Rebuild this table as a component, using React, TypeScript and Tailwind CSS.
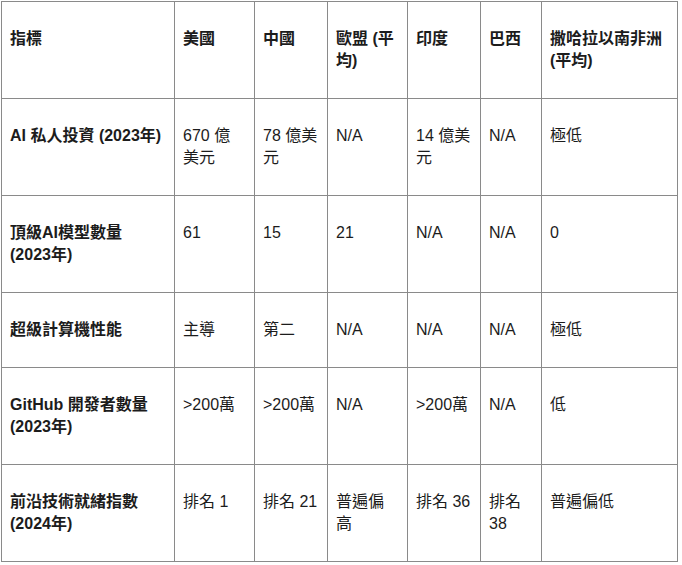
const font = { fontFamily: '"Liberation Sans", "Noto Sans CJK TC", sans-serif' }

const headers = [["指標"], ["美國"], ["中國"], ["歐盟 (平", "均)"], ["印度"], ["巴西"], ["撒哈拉以南非洲", "(平均)"]]

const rows: string[][][] = [
  [["AI 私人投資 (2023年)"], ["670 億", "美元"], ["78 億美", "元"], ["N/A"], ["14 億美", "元"], ["N/A"], ["極低"]],
  [["頂級AI模型數量", "(2023年)"], ["61"], ["15"], ["21"], ["N/A"], ["N/A"], ["0"]],
  [["超級計算機性能"], ["主導"], ["第二"], ["N/A"], ["N/A"], ["N/A"], ["極低"]],
  [["GitHub 開發者數量", "(2023年)"], [">200萬"], [">200萬"], ["N/A"], [">200萬"], ["N/A"], ["低"]],
  [["前沿技術就緒指數", "(2024年)"], ["排名 1"], ["排名 21"], ["普遍偏", "高"], ["排名 36"], ["排名", "38"], ["普遍偏低"]],
]

const widths = ["w-[173px]", "w-[80px]", "w-[73px]", "w-[80px]", "w-[73px]", "w-[61px]", "w-[136px]"]

function Lines({ lines }: { lines: string[] }) {
  return (
    <>
      {lines.map((l, i) => (
        <span key={i}>
          {i > 0 && <br />}
          {l}
        </span>
      ))}
    </>
  )
}

export default function App() {
  return (
    <div className="bg-white min-h-[565px] pl-[1px] pt-[1px] text-[#1c1c1c]" style={font}>
      <table className="w-[677px] table-fixed border-collapse text-[16px] leading-[22px]">
        <colgroup>
          {widths.map((w, i) => (
            <col key={i} className={w} />
          ))}
        </colgroup>
        <thead>
          <tr>
            {headers.map((h, i) => (
              <th
                key={i}
                className="border border-[#8a8a8a] px-[8px] pt-[26px] pb-[26px] text-left align-top font-bold whitespace-nowrap"
              >
                <Lines lines={h} />
              </th>
            ))}
          </tr>
        </thead>
        <tbody>
          {rows.map((r, ri) => (
            <tr key={ri}>
              {r.map((c, ci) => (
                <td
                  key={ci}
                  className={
                    ci === 0
                      ? "border border-[#8a8a8a] px-[8px] pt-[26px] pb-[26px] align-top font-bold whitespace-nowrap"
                      : "border border-[#8a8a8a] px-[8px] pt-[26px] pb-[26px] align-top whitespace-nowrap"
                  }
                >
                  <Lines lines={c} />
                </td>
              ))}
            </tr>
          ))}
        </tbody>
      </table>
    </div>
  )
}
